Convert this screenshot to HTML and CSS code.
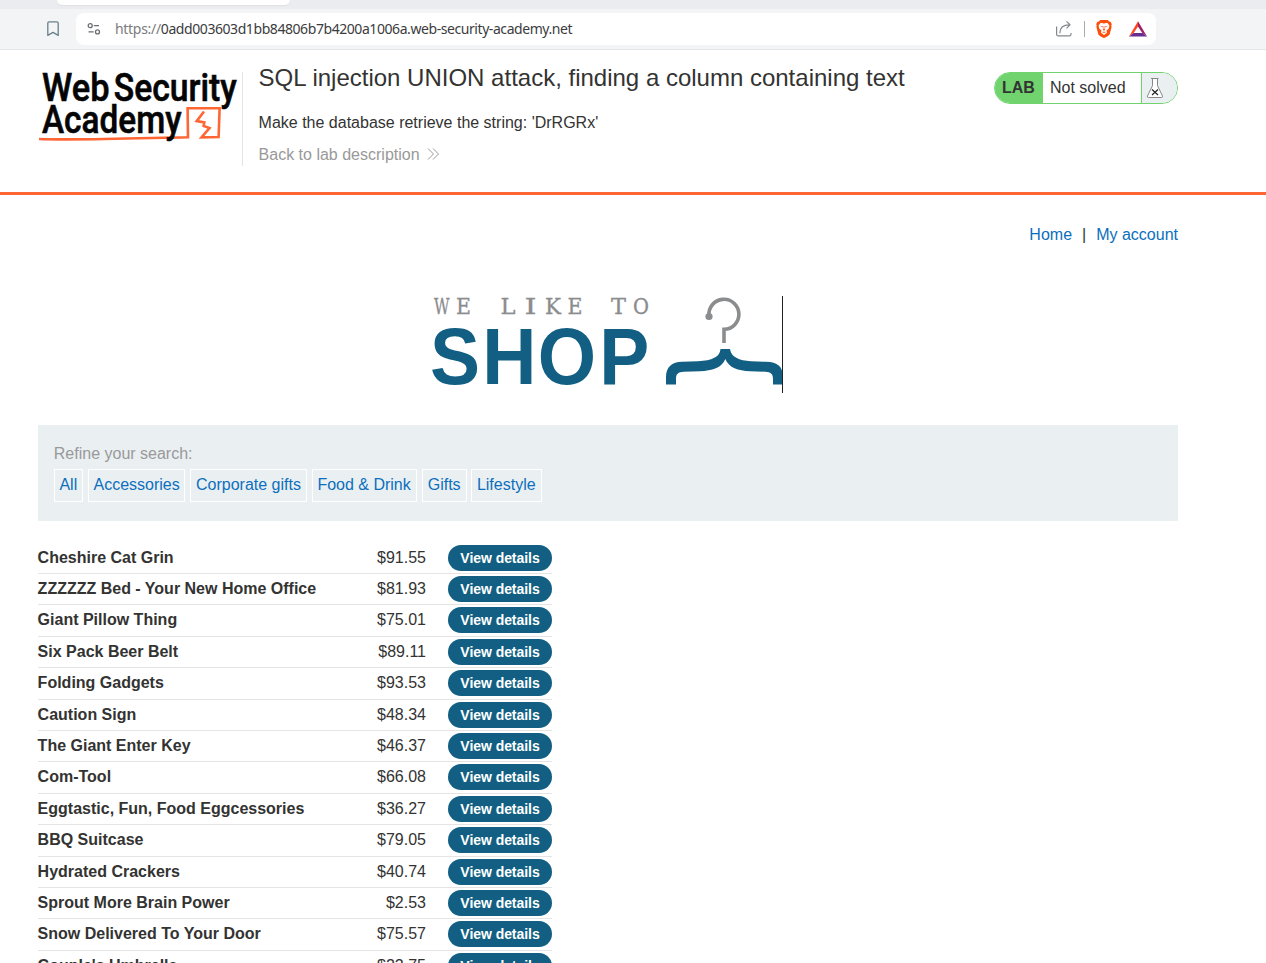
FILE: index.html
```html
<!DOCTYPE html>
<html lang="en">
<head>
<meta charset="utf-8">
<title>SQL injection UNION attack, finding a column containing text</title>
<link rel="stylesheet" href="styles.css">
</head>
<body>
<div class="browser">
  <div class="tabstrip"><div class="tab"></div></div>
  <div class="toolbar">
    <svg class="bookmark" width="14" height="18" viewBox="0 0 14 18"><path d="M1.8 3.2a1.4 1.4 0 0 1 1.4-1.4h7.6a1.4 1.4 0 0 1 1.4 1.4v12.2L7 12.4l-5.2 3z" fill="none" stroke="#69808c" stroke-width="1.3" stroke-linejoin="round"/></svg>
    <div class="urlbar">
      <svg class="site-settings" width="14" height="14" viewBox="0 0 14 14" fill="none" stroke="#6b6f73" stroke-width="1.3"><circle cx="3.2" cy="3.7" r="2"/><path d="M6.8 3.7H12M1.5 9.9h5.2"/><circle cx="10.5" cy="9.9" r="2"/></svg>
      <span class="url"><span class="scheme">https://</span>0add003603d1bb84806b7b4200a1006a.web-security-academy.net</span>
      <svg class="share" width="18" height="18" viewBox="0 0 18 18" fill="none" stroke="#85878a" stroke-width="1.2"><path d="M1.600 6.500v7.800q0 1.500 1.500 1.500h11.400q1.500 0 1.500-1.500V12.900M4.800 13.300c0-5.300 3-8.500 9.700-8.500M11.500 1.300l3.500 3.500-3.500 3.500"/></svg>
      <span class="sep"></span>
      <svg class="brave" width="16" height="18" viewBox="0 0 16 18"><path d="M4.200 0h7.600l1.200 1.500 1.600.3 1.200 2.500-.5 1.200.3 1.500-1.900 7.300c-.4 1.200-4.500 3.700-5.700 3.700s-5.300-2.500-5.700-3.700L.4 7l.3-1.500-.5-1.200 1.200-2.500 1.600-.3z" fill="#fb4f0c"/><path d="M4.800 2.800l3.200.6 3.200-.6 2.200 2.700-.7 3-2.300 2.200.8 1.800L8 15l-3.200-2.500.8-1.800-2.300-2.200-.7-3z" fill="#fff"/><path d="M4 5.800l3 .7-.3 1zM12 5.800l-3 .7.3 1zM7.600 6h.8v3l1 .8L8 10.700l-1.400-.9 1-.8zM6 12.400l2-1 2 1-2 .4z" fill="#fb4f0c"/></svg>
      <svg class="bat" width="18" height="16" viewBox="0 0 18 16"><path d="M9 .3V5.600L4.700 12 0 15.400z" fill="#ff4724"/><path d="M9 .3L18 15.400 13.300 12 9 5.600z" fill="#9e1f63"/><path d="M0 15.400L4.700 12h8.600l4.700 3.400z" fill="#662d91"/></svg>
    </div>
  </div>
</div>

<header class="lab-header">
  <svg class="academy-logo" width="204" height="84" viewBox="0 0 204 84">
    <path d="M1 79c40 1.500 100-.8 149-1.800l-.4-29 32 0-1 28.800-17.100.3 8-9.300-5.900-2 .7-3.600-7.600-1.300 7.300-9.600" fill="none" stroke="#ff6633" stroke-width="2.600"/>
    <g class="academy-text">
      <text x="4" y="40.800" textLength="67.500" lengthAdjust="spacingAndGlyphs">Web</text>
      <text x="75.800" y="40.800" textLength="123" lengthAdjust="spacingAndGlyphs">Security</text>
      <text x="4" y="73.200" textLength="139.500" lengthAdjust="spacingAndGlyphs">Academy</text>
    </g>
  </svg>
  <div class="lab-info">
    <h2>SQL injection UNION attack, finding a column containing text</h2>
    <p class="hint">Make the database retrieve the string: 'DrRGRx'</p>
    <a class="back">Back to lab description<svg width="13" height="12" viewBox="0 0 13 12" fill="none" stroke="#9a9a9a" stroke-width="1"><path d="M1 .5L6.500 6 1 11.500M6 .5L11.500 6 6 11.500"/></svg></a>
  </div>
  <div class="status"><b>LAB</b><span>Not solved</span>
    <div class="flask"><svg width="18" height="22" viewBox="0 0 18 22" fill="#fff" stroke="#888" stroke-width="1"><path d="M5 1.500h7.500M6.500 1.500v7.200L1.500 19q-.4 1.500 1 1.500h13q1.400 0 1-1.500L11.500 8.700V1.500"/><path d="M6 12.500l6 5.500m0-5.500L6 18" stroke="#222" stroke-width="1.200"/></svg></div>
  </div>
</header>

<main class="page">
  <nav class="account"><a>Home</a><span>|</span><a>My account</a></nav>
  <svg class="shop-logo" width="352" height="98" viewBox="0 0 352 98">
    <text class="tagline" y="18.500"><tspan x="2" textLength="15.500" lengthAdjust="spacingAndGlyphs">W</tspan><tspan x="24" textLength="15" lengthAdjust="spacingAndGlyphs">E</tspan> <tspan x="68.500" textLength="15" lengthAdjust="spacingAndGlyphs">L</tspan><tspan x="92.500" textLength="12" lengthAdjust="spacingAndGlyphs">I</tspan><tspan x="113" textLength="16" lengthAdjust="spacingAndGlyphs">K</tspan><tspan x="135.500" textLength="15" lengthAdjust="spacingAndGlyphs">E</tspan> <tspan x="179" textLength="15" lengthAdjust="spacingAndGlyphs">T</tspan><tspan x="201" textLength="16" lengthAdjust="spacingAndGlyphs">O</tspan></text>
    <text class="shop-word" transform="scale(.95 1)" x="-2 52.800 111.400 176" y="89.500">SHOP</text>
    <path d="M277 21A15 15 0 1 1 292 34.300V48" fill="none" stroke="#8b8c8e" stroke-width="3.600"/><circle cx="277" cy="21.500" r="3.600" fill="#8b8c8e"/>
    <path d="M234 89.500V82C234 72 240 67 250 66.800L266 66.300C280 65.500 288 62 288.500 54H298C299 62 307 65.500 319 66.300L334 66.800C346 67 350.500 72 350.500 80V89.500H341V84C341 79 339 77 333 76.700L318 76.300C306 75.500 297 73 293.300 64C290 73 280 75.500 268 76.300L252 76.700C246 77 244 79 244 84V89.500Z" fill="#125f83"/>
    <path d="M350.500 1v97" stroke="#222" stroke-width="1"/>
  </svg>
  <section class="filters">
    <div class="filter-label">Refine your search:</div>
    <div class="filter-list"><a class="all">All</a><a class="accessories">Accessories</a><a class="corporate">Corporate gifts</a><a class="food">Food &amp; Drink</a><a class="gifts">Gifts</a><a class="lifestyle">Lifestyle</a></div>
  </section>
  <div class="products">
    <div class="row"><b>Cheshire Cat Grin</b><span>$91.55</span><a>View details</a></div>
    <div class="row"><b>ZZZZZZ Bed - Your New Home Office</b><span>$81.93</span><a>View details</a></div>
    <div class="row"><b>Giant Pillow Thing</b><span>$75.01</span><a>View details</a></div>
    <div class="row"><b>Six Pack Beer Belt</b><span>$89.11</span><a>View details</a></div>
    <div class="row"><b>Folding Gadgets</b><span>$93.53</span><a>View details</a></div>
    <div class="row"><b>Caution Sign</b><span>$48.34</span><a>View details</a></div>
    <div class="row"><b>The Giant Enter Key</b><span>$46.37</span><a>View details</a></div>
    <div class="row"><b>Com-Tool</b><span>$66.08</span><a>View details</a></div>
    <div class="row"><b>Eggtastic, Fun, Food Eggcessories</b><span>$36.27</span><a>View details</a></div>
    <div class="row"><b>BBQ Suitcase</b><span>$79.05</span><a>View details</a></div>
    <div class="row"><b>Hydrated Crackers</b><span>$40.74</span><a>View details</a></div>
    <div class="row"><b>Sprout More Brain Power</b><span>$2.53</span><a>View details</a></div>
    <div class="row"><b>Snow Delivered To Your Door</b><span>$75.57</span><a>View details</a></div>
    <div class="row"><b>Couple's Umbrella</b><span>$22.75</span><a>View details</a></div>
  </div>
</main>
</body>
</html>
```
FILE: styles.css
```css
* { box-sizing: border-box; }
html { height: 963px; overflow: hidden; }
body { margin: 0; height: 963px; overflow: hidden; background: #fff; color: #333332; font: 16px/20px "Liberation Sans", Arial, sans-serif; }
svg { display: block; flex: none; }
a { color: #0b6fbd; }

.tabstrip { height: 9px; background: #ebecf0; padding-left: 57px; }
.tab { width: 233px; height: 5px; background: #fff; border-radius: 0 0 6px 6px; box-shadow: 0 1px 1px #dfe0e4; }
.toolbar { height: 41px; padding: 4px 0 0 46px; display: flex; background: #f3f4f6; border-bottom: 1px solid #e5e6e8; }
.bookmark { margin-top: 7px; }
.urlbar { width: 1080px; height: 32px; margin-left: 16px; padding-left: 11px; display: flex; align-items: center; background: #fff; border-radius: 8px; }
.url { width: 940px; margin-left: 14px; font: 14px/20px "Noto Sans", sans-serif; letter-spacing: -0.43px; color: #3b3c3e; white-space: nowrap; }
.scheme { color: #7b7c7e; letter-spacing: -0.3px; }
.sep { width: 1px; height: 16px; margin: 0 11px; background: #aaa; }
.bat { margin-left: 17px; }

.lab-header { height: 145px; padding: 10px 88px 0 38px; display: flex; align-items: flex-start; border-bottom: 3px solid #ff6633; }
.academy-logo { overflow: visible; }
.academy-text { font: 500 38px Roboto, sans-serif; fill: #050505; stroke: #050505; stroke-width: 0.6px; }
.lab-info { height: 94px; margin-top: 12px; padding-left: 15.6px; border-left: 1px solid #e4e4e4; white-space: nowrap; }
.lab-info h2 { margin: -9px 0 0; font-size: 24px; line-height: 30px; font-weight: 400; }
.hint { margin: 20px 0 12px; }
.back { display: flex; align-items: center; color: #999; }
.back svg { margin: -2px 0 0 7px; }
.status { width: 184px; height: 32px; margin: 12px 0 0 auto; display: flex; overflow: hidden; border: 1px solid #70d36e; border-radius: 16px; line-height: 30px; }
.status b { width: 48px; padding-left: 7px; background: #70d36e; }
.status span { width: 99px; padding-left: 7px; border-right: 1px solid #70d36e; }
.flask { flex: 1; padding: 4px 0 0 4px; background: #eaeff2; }

.page { width: 1140px; margin-left: 38px; }
.account { padding-top: 30px; display: flex; justify-content: flex-end; }
.account span { margin: 0 10px; }
.shop-logo { margin: 50px 0 0 394px; overflow: visible; }
.tagline { font: 21.5px "DejaVu Serif", serif; fill: #8b8c8e; stroke: #8b8c8e; stroke-width: 0.3px; }
.shop-word { font: bold 79px "Liberation Sans", Arial, sans-serif; fill: #125f83; }

.filters { height: 96px; margin-top: 32px; padding: 19px 15.8px; background: #eaeff2; }
.filter-label { color: #999; }
.filter-list { margin-top: 5px; display: flex; gap: 4.6px; }
.filter-list a { height: 33px; border: 1px solid #fff; text-align: center; line-height: 29px; white-space: nowrap; }
.all { width: 29px; }
.accessories { width: 97.6px; margin-left: 0.4px; }
.corporate { width: 117px; }
.food { width: 105px; }
.gifts { width: 45px; margin: 0 -0.5px 0 0.5px; }
.lifestyle { width: 71px; }

.products { width: 514px; padding-top: 21.6px; }
.row { height: 31.4px; padding-top: 2px; display: grid; grid-template-columns: 310px 78px 22px 104px; border-bottom: 1px solid #e4e4e4; line-height: 25px; white-space: nowrap; }
.row b { margin-left: -0.4px; }
.row span { text-align: right; }
.row a { grid-column: 4; height: 26px; border-radius: 13px; background: #125f83; color: #fff; font-size: 14px; letter-spacing: -0.05px; font-weight: 700; line-height: 27px; text-align: center; }
```
